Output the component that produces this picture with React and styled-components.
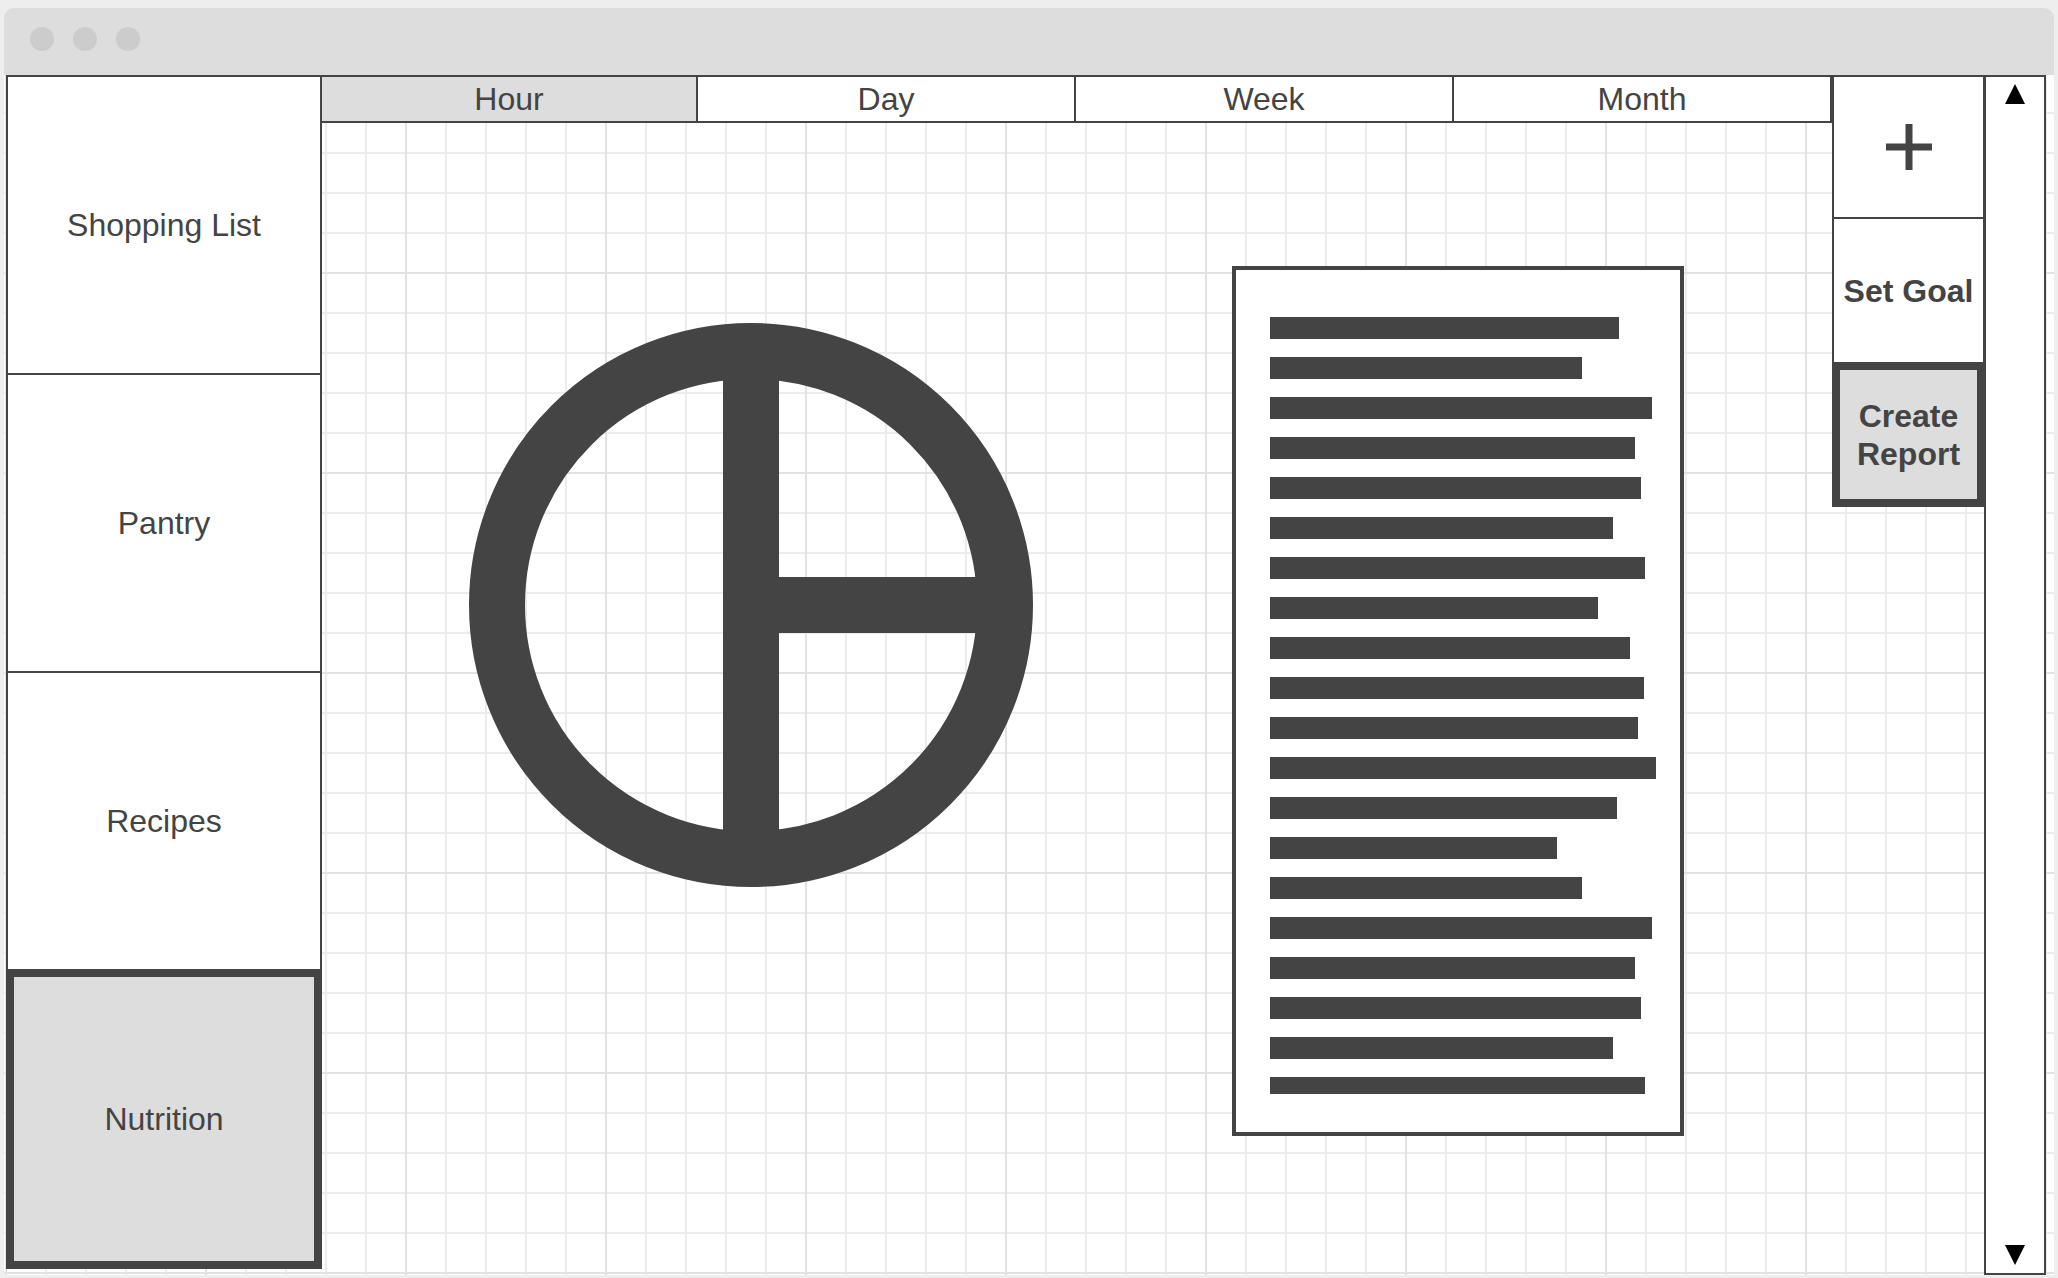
import React from "react";
import styled, { createGlobalStyle } from "styled-components";

const GlobalStyle = createGlobalStyle`
  html, body {
    margin: 0;
    padding: 0;
    background: #eeeeee;
  }
  body {
    font-family: "Liberation Sans", Arial, sans-serif;
    color: #444444;
  }
`;

const Page = styled.div`
  width: 2058px;
  height: 1278px;
  padding: 8px 4px 0 4px;
  box-sizing: border-box;
  overflow: hidden;
`;

const Window = styled.div`
  width: 2050px;
  display: flex;
  flex-direction: column;
`;

const TitleBar = styled.div`
  height: 67px;
  background: #dddddd;
  border-radius: 10px 10px 0 0;
  display: flex;
  align-items: center;
  gap: 19px;
  padding: 0 0 5px 26px;
  box-sizing: border-box;
`;

const Dot = styled.span`
  width: 24px;
  height: 24px;
  border-radius: 50%;
  background: #cccccc;
`;

const Body = styled.div`
  height: 1200px;
  display: flex;
  align-items: stretch;
  padding-left: 2px;
  background-color: #ffffff;
  background-image:
    linear-gradient(to right, #e2e2e2 2px, transparent 2px),
    linear-gradient(to bottom, #e2e2e2 2px, transparent 2px),
    linear-gradient(to right, #ececec 2px, transparent 2px),
    linear-gradient(to bottom, #ececec 2px, transparent 2px);
  background-size: 200px 200px, 200px 200px, 40px 40px, 40px 40px;
  background-position: 1px -3px, 1px -3px, 1px -3px, 1px -3px;
`;

const Sidebar = styled.div`
  width: 316px;
  flex-shrink: 0;
  display: flex;
  flex-direction: column;
`;

const NavItem = styled.div`
  height: 300px;
  box-sizing: border-box;
  margin-top: ${(p) => (p.$first ? "0" : "-2px")};
  border: ${(p) => (p.$active ? "8px" : "2px")} solid #444444;
  background: ${(p) => (p.$active ? "#dddddd" : "#ffffff")};
  display: flex;
  align-items: center;
  justify-content: center;
  font-size: 32px;
  color: #444444;
`;

const Main = styled.div`
  width: 1512px;
  flex-shrink: 0;
  margin-left: -2px;
  display: flex;
  flex-direction: column;
`;

const Tabs = styled.div`
  display: grid;
  grid-template-columns: repeat(4, 1fr);
  height: 48px;
`;

const Tab = styled.div`
  box-sizing: border-box;
  border: 2px solid #444444;
  margin-left: ${(p) => (p.$first ? "0" : "-2px")};
  background: ${(p) => (p.$active ? "#dddddd" : "#ffffff")};
  display: flex;
  align-items: center;
  justify-content: center;
  font-size: 32px;
  color: #444444;
`;

const Canvas = styled.div`
  flex: 1;
  display: flex;
  align-items: flex-start;
  padding-left: 149px;
  gap: 199px;
`;

const Chart = styled.svg`
  margin-top: 200px;
  flex-shrink: 0;
`;

const Doc = styled.div`
  margin-top: 143px;
  width: 452px;
  height: 870px;
  box-sizing: border-box;
  border: 4px solid #444444;
  background: #ffffff;
  padding: 47px 0 0 34px;
  flex-shrink: 0;
`;

const Lines = styled.div`
  height: 777px;
  overflow: hidden;
  display: flex;
  flex-direction: column;
  gap: 18px;
`;

const Line = styled.div`
  height: 22px;
  flex-shrink: 0;
  background: #444444;
`;

const Actions = styled.div`
  width: 153px;
  flex-shrink: 0;
  display: flex;
  flex-direction: column;
`;

const ActionButton = styled.div`
  box-sizing: border-box;
  height: ${(p) => p.$h}px;
  margin-top: ${(p) => p.$mt || 0}px;
  border: ${(p) => (p.$active ? "8px" : "2px")} solid #444444;
  background: ${(p) => (p.$active ? "#dddddd" : "#ffffff")};
  display: flex;
  align-items: center;
  justify-content: center;
  text-align: center;
  font-size: 32px;
  font-weight: 700;
  line-height: 38px;
  color: #444444;
`;

const Scrollbar = styled.div`
  width: 62px;
  flex-shrink: 0;
  margin-left: -1px;
  box-sizing: border-box;
  border: 2px solid #444444;
  background: #ffffff;
  display: flex;
  flex-direction: column;
  justify-content: space-between;
  align-items: center;
  padding: 7px 0 8px;
`;

const lineWidths = [
  349, 312, 382, 365, 371, 343, 375, 328, 360, 374, 368, 386, 347, 287, 312,
  382, 365, 371, 343, 375,
];

const navItems = ["Shopping List", "Pantry", "Recipes", "Nutrition"];
const tabs = ["Hour", "Day", "Week", "Month"];

export default function App() {
  return (
    <Page>
      <GlobalStyle />
      <Window>
        <TitleBar>
          <Dot />
          <Dot />
          <Dot />
        </TitleBar>
        <Body>
          <Sidebar>
            {navItems.map((n, i) => (
              <NavItem key={n} $first={i === 0} $active={n === "Nutrition"}>
                {n}
              </NavItem>
            ))}
          </Sidebar>
          <Main>
            <Tabs>
              {tabs.map((t, i) => (
                <Tab key={t} $first={i === 0} $active={t === "Hour"}>
                  {t}
                </Tab>
              ))}
            </Tabs>
            <Canvas>
              <Chart width="564" height="564" viewBox="0 0 564 564">
                <circle
                  cx="282"
                  cy="282"
                  r="254"
                  fill="none"
                  stroke="#444444"
                  strokeWidth="56"
                />
                <rect x="254" y="20" width="56" height="524" fill="#444444" />
                <rect x="282" y="254" width="262" height="56" fill="#444444" />
              </Chart>
              <Doc>
                <Lines>
                  {lineWidths.map((w, i) => (
                    <Line key={i} style={{ width: w }} />
                  ))}
                </Lines>
              </Doc>
            </Canvas>
          </Main>
          <Actions>
            <ActionButton $h={144}>
              <svg width="46" height="46" viewBox="0 0 46 46">
                <rect x="19.5" y="0" width="7" height="46" fill="#444444" />
                <rect x="0" y="19.5" width="46" height="7" fill="#444444" />
              </svg>
            </ActionButton>
            <ActionButton $h={147} $mt={-2}>
              Set Goal
            </ActionButton>
            <ActionButton $h={145} $mt={-2} $active>
              Create
              <br />
              Report
            </ActionButton>
          </Actions>
          <Scrollbar>
            <svg width="20" height="20" viewBox="0 0 20 20">
              <polygon points="10,0 20,20 0,20" fill="#000000" />
            </svg>
            <svg width="20" height="20" viewBox="0 0 20 20">
              <polygon points="0,0 20,0 10,20" fill="#000000" />
            </svg>
          </Scrollbar>
        </Body>
      </Window>
    </Page>
  );
}
